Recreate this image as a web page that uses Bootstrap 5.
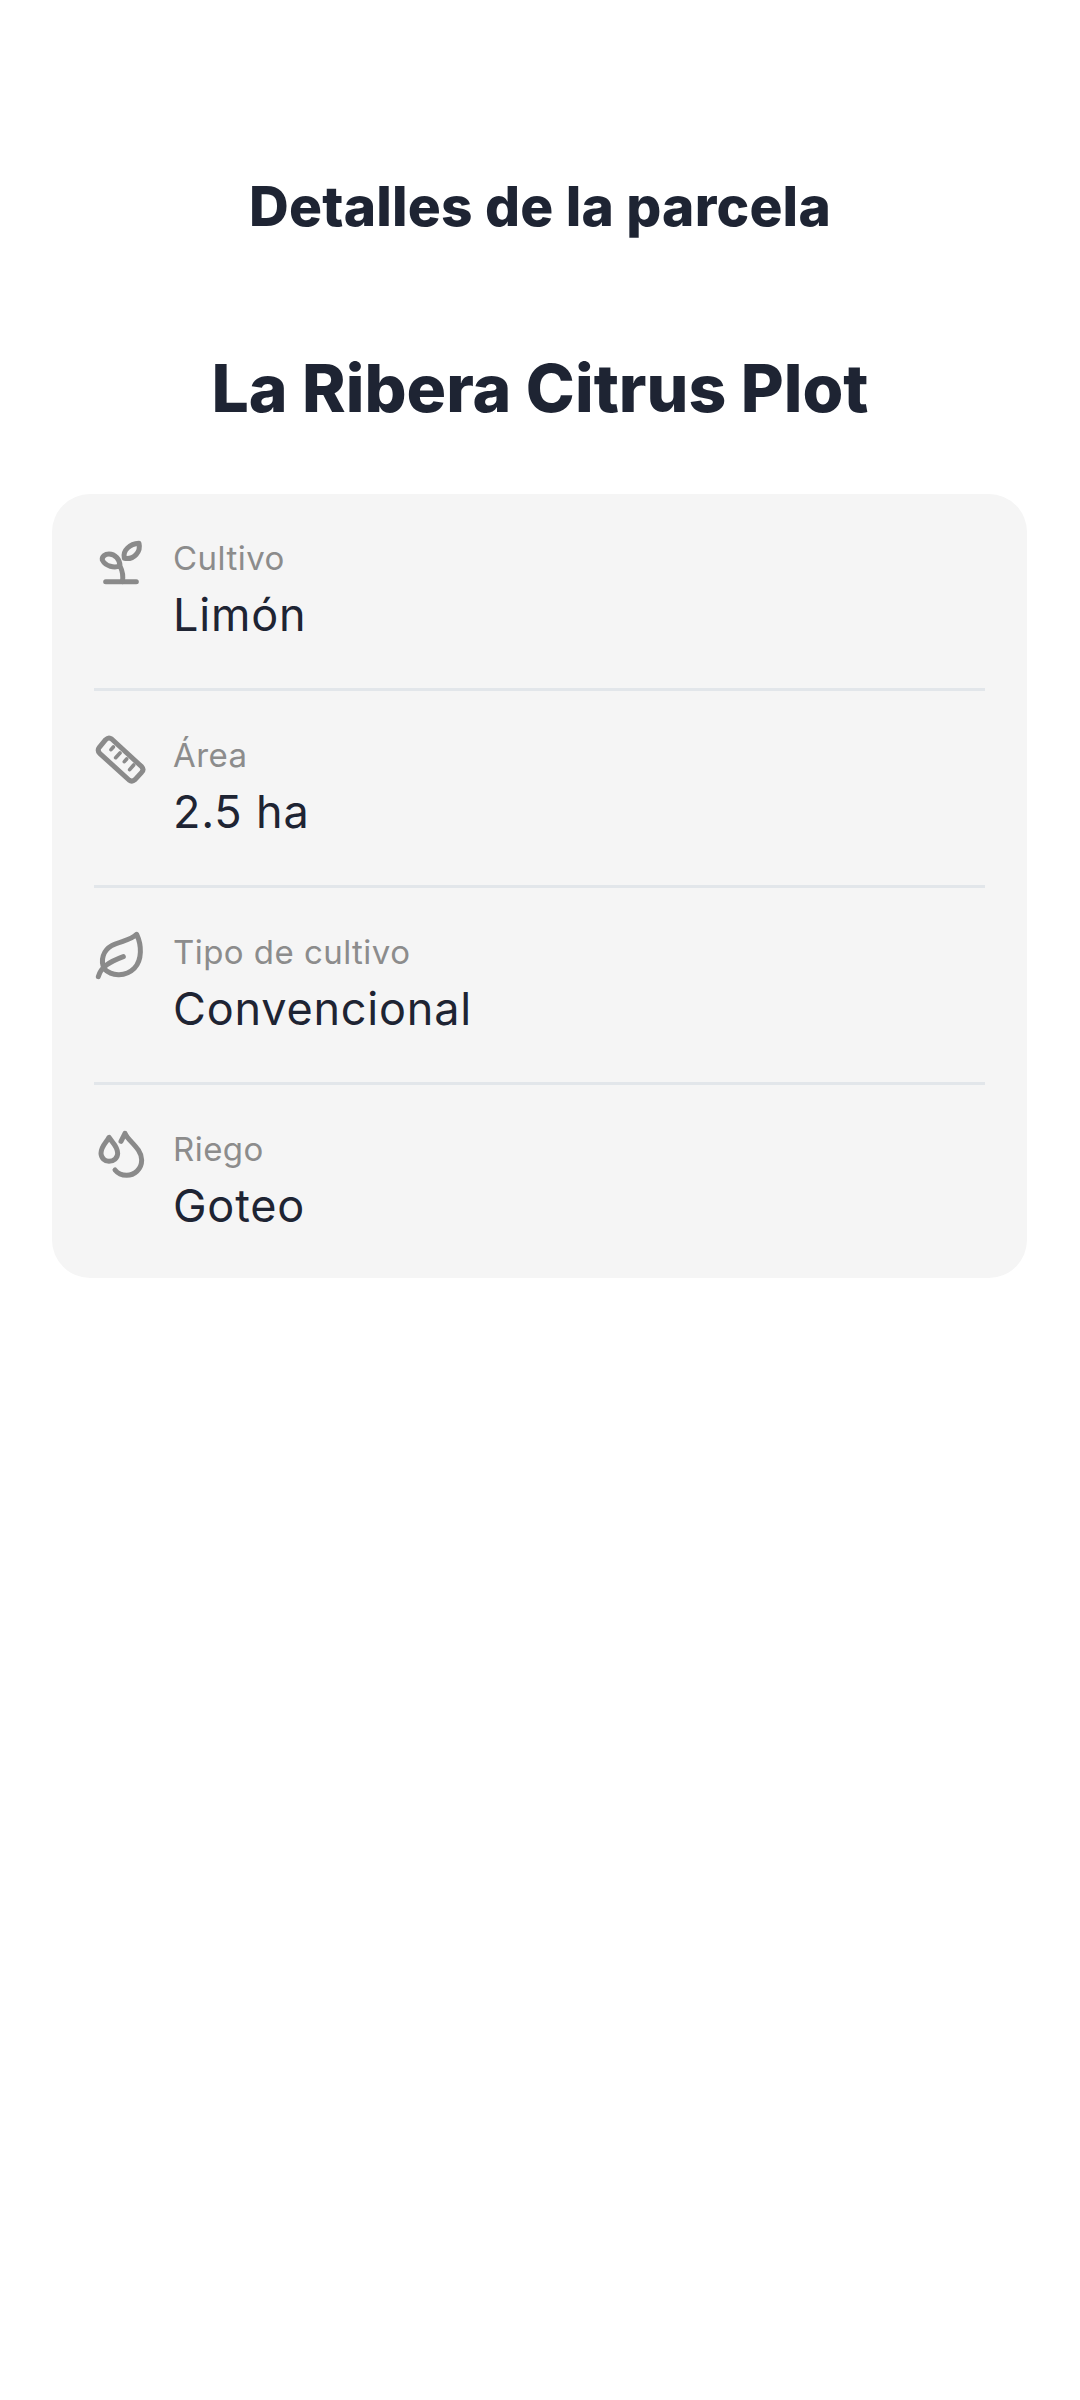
<!DOCTYPE html>
<html lang="es">
<head>
<meta charset="utf-8">
<title>Detalles de la parcela</title>
<link rel="stylesheet" href="https://cdn.jsdelivr.net/npm/bootstrap@5.3.0/dist/css/bootstrap.min.css">
<style>
body{background:#fff;font-family:"Inter","Noto Sans","Liberation Sans",sans-serif;color:#1e2433}
.screen-head{padding:174px 52px 0}
.screen-title{font-size:55px;line-height:64px;font-weight:800;margin:0;color:#1e2433;white-space:nowrap;letter-spacing:.2px}
.plot-name{font-size:66px;line-height:80px;font-weight:800;margin:110px 0 0;color:#1e2433;white-space:nowrap}
.info-panel{margin:66px 53px 0 52px;background:#f5f5f5;border-radius:38px;padding:0 42px 0 42px}
.info-row{padding:36px 0 0;height:197px;border-bottom:3px solid #e2e6ea;gap:19px}
.info-row:last-child{border-bottom:0;height:193px}
.info-icon{width:60px;height:60px;flex:none;fill:none;stroke:#8a8a8a;stroke-width:15;stroke-linecap:round;stroke-linejoin:round}
.info-label{font-size:33px;line-height:44px;color:#8c8c8c;margin-top:6px;letter-spacing:.45px}
.info-value{font-size:45px;line-height:60px;color:#1e2433;margin-top:5px;letter-spacing:.8px}
</style>
</head>
<body>
<header class="screen-head text-center">
  <h1 class="screen-title">Detalles de la parcela</h1>
  <h2 class="plot-name">La Ribera Citrus Plot</h2>
</header>
<section class="info-panel">
  <div class="info-row d-flex align-items-start">
    <svg class="info-icon" viewBox="27 0 180 180" aria-hidden="true">
      <path d="M62 155H154"/>
      <path d="M112 155C116 135 112 122 105 108C88 114 62 110 52 90C50 80 60 72 72 72C90 72 105 88 105 108"/>
      <path d="M118 85C112 60 135 42 162 40C168 64 148 90 118 85Z"/>
    </svg>
    <div>
      <div class="info-label">Cultivo</div>
      <div class="info-value">Limón</div>
    </div>
  </div>
  <div class="info-row d-flex align-items-start">
    <svg class="info-icon" viewBox="27 6 180 180" aria-hidden="true">
      <path d="M80 42L170 125Q178 134 170 142L150 164Q141 172 132 165L44 85Q36 76 43 67L62 44Q71 35 80 42Z"/>
      <path d="M85 66L78 74M105 84L92 98M125 102L118 110M146 120L134 134" stroke-width="11"/>
    </svg>
    <div>
      <div class="info-label">Área</div>
      <div class="info-value">2.5 ha</div>
    </div>
  </div>
  <div class="info-row d-flex align-items-start">
    <svg class="info-icon" viewBox="27 -3 180 180" aria-hidden="true">
      <path d="M155 28C135 48 105 48 80 62C55 76 45 105 58 132C78 152 120 158 148 130C172 105 170 60 155 28Z"/>
      <path d="M40 155C48 125 75 110 115 95"/>
    </svg>
    <div>
      <div class="info-label">Tipo de cultivo</div>
      <div class="info-value">Convencional</div>
    </div>
  </div>
  <div class="info-row d-flex align-items-start">
    <svg class="info-icon" viewBox="27 3 180 180" aria-hidden="true">
      <path d="M72 52C66 66 48 78 48 100C48 114 60 124 72 124C86 124 98 114 98 100C98 78 80 66 72 52Z"/>
      <path d="M108 64L120 40C128 62 170 85 170 120C170 148 148 166 125 166C110 166 98 160 90 150"/>
    </svg>
    <div>
      <div class="info-label">Riego</div>
      <div class="info-value">Goteo</div>
    </div>
  </div>
</section>
<script src="https://cdn.jsdelivr.net/npm/bootstrap@5.3.0/dist/js/bootstrap.bundle.min.js"></script>
</body>
</html>
